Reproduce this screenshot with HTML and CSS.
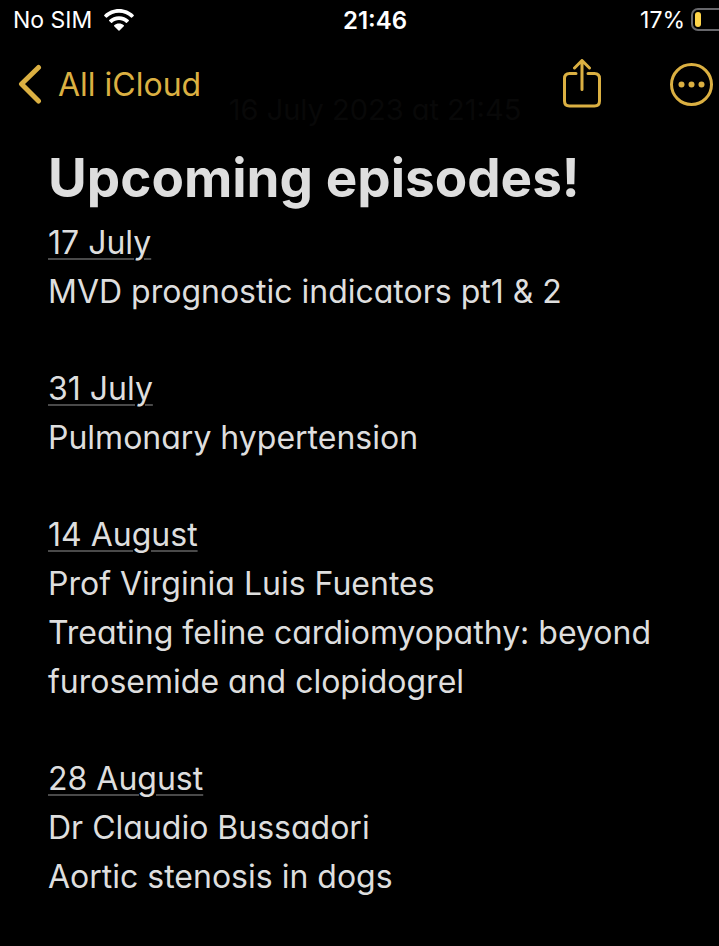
FILE: index.html
```html
<!DOCTYPE html>
<html lang="en">
<head>
<meta charset="utf-8">
<meta name="viewport" content="width=device-width, initial-scale=1">
<title>Upcoming episodes!</title>
<link rel="stylesheet" href="styles.css">
</head>
<body>
<div class="screen">
  <div class="status">
    <div class="status-left">
      <span>No SIM</span>
      <svg class="wifi" width="30" height="22" viewBox="0 0 30 22" aria-hidden="true">
        <path d="M15 0C9.300 0 4 2.200 .3 5.900Q-.1 6.400 .3 6.900L2 8.600Q2.500 9 3 8.600C6.200 5.500 10.400 3.800 15 3.800S23.800 5.500 27 8.600Q27.500 9 28 8.600L29.700 6.900Q30.100 6.400 29.700 5.900C26 2.200 20.700 0 15 0Z"/>
        <path d="M15 7.300C11.200 7.300 7.800 8.700 5.200 11.100Q4.800 11.600 5.200 12L7.100 13.800Q7.600 14.200 8.100 13.800C10 12.100 12.400 11.100 15 11.100S20 12.100 21.900 13.800Q22.400 14.200 22.900 13.800L24.800 12Q25.200 11.600 24.800 11.100C22.200 8.700 18.800 7.300 15 7.300Z"/>
        <path d="M15 14.500C13.100 14.500 11.500 15.100 10.200 16.200Q9.700 16.700 10.200 17.200L14.500 21.400Q15 21.900 15.500 21.400L19.800 17.200Q20.300 16.700 19.800 16.200C18.500 15.100 16.900 14.500 15 14.500Z"/>
      </svg>
    </div>
    <time class="clock">21:46</time>
    <div class="status-right">
      <span>17%</span>
      <svg width="54" height="24" viewBox="0 0 54 24" aria-hidden="true">
        <rect class="battery-shell" x="1" y="1" width="47" height="21" rx="6"/>
        <rect class="battery-level" x="4" y="4" width="6" height="15" rx="3"/>
      </svg>
    </div>
  </div>
  <nav class="toolbar">
    <button class="tool back" type="button">
      <svg width="24" height="40" viewBox="0 0 24 40" aria-hidden="true"><path d="M20.500 3.500L3.500 20L20.500 37"/></svg>
      <span>All iCloud</span>
    </button>
    <div class="actions">
      <button class="tool" type="button" aria-label="Share">
        <svg width="40" height="50" viewBox="0 0 40 50" aria-hidden="true"><path class="thin" d="M14 14.500H7.500Q2.500 14.500 2.500 19.500V42Q2.500 47 7.500 47H32.500Q37.500 47 37.500 42V19.500Q37.500 14.500 32.500 14.500H26M20 30.500V2M12.500 9L20 1.500L27.500 9"/></svg>
      </button>
      <button class="tool" type="button" aria-label="More">
        <svg width="44" height="44" viewBox="0 0 44 44" aria-hidden="true"><circle class="thin" cx="21.500" cy="22.500" r="20"/><g class="dots"><circle cx="11.500" cy="22.500" r="3"/><circle cx="21.500" cy="22.500" r="3"/><circle cx="31.500" cy="22.500" r="3"/></g></svg>
      </button>
    </div>
    <time class="edited">16 July 2023 at 21:45</time>
  </nav>
  <main class="note">
    <h1>Upcoming episodes!</h1>
    <section>
      <p><span class="date">17 July</span></p>
      <p>MVD prognostic indicators pt1 &amp; 2</p>
    </section>
    <section>
      <p><span class="date">31 July</span></p>
      <p>Pulmonary hypertension</p>
    </section>
    <section>
      <p><span class="date">14 August</span></p>
      <p>Prof Virginia Luis Fuentes</p>
      <p>Treating feline cardiomyopathy: beyond furosemide and clopidogrel</p>
    </section>
    <section>
      <p><span class="date">28 August</span></p>
      <p>Dr Claudio Bussadori</p>
      <p>Aortic stenosis in dogs</p>
    </section>
  </main>
</div>
</body>
</html>
```
FILE: styles.css
```css
* { box-sizing: border-box; }

body {
  margin: 0;
  background: #000;
  color: #dedede;
  font-family: Inter, "Liberation Sans", sans-serif;
  font-size: 32px;
  font-feature-settings: "cv11";
  overflow-x: hidden;
}

/* The phone screen runs slightly past the right edge of the window. */
.screen {
  width: calc(100% + 31px);
}

.status {
  display: grid;
  grid-template-columns: 1fr auto 1fr;
  align-items: center;
  height: 40px;
  padding: 0 5px;
  color: #fff;
  font-size: 23px;
}

.status-left,
.status-right {
  display: flex;
  align-items: center;
  gap: 12px;
}

.status-left { padding-left: 8px; }

.status-right {
  justify-content: flex-end;
  gap: 6px;
}

.wifi { fill: #fff; }

.clock {
  font-size: 24px;
  font-weight: 600;
}

.battery-shell {
  fill: none;
  stroke: #67676b;
  stroke-width: 2;
}

.battery-level { fill: #ffd54a; }

.toolbar {
  position: relative;
  display: flex;
  align-items: center;
  justify-content: space-between;
  height: 88px;
  padding: 0 36px 0 18px;
}

.tool {
  display: flex;
  align-items: center;
  padding: 0;
  border: 0;
  background: none;
  color: #dbb042;
  font: inherit;
}

.back { gap: 16px; }

.tool svg {
  fill: none;
  stroke: currentColor;
  stroke-width: 5;
  stroke-linecap: round;
  stroke-linejoin: round;
}

.tool .thin { stroke-width: 3; }

.tool .dots {
  fill: currentColor;
  stroke: none;
}

.actions {
  display: flex;
  align-items: center;
  gap: 68px;
}

/* Edit date faded out beneath the toolbar. */
.edited {
  position: absolute;
  inset: auto 0 0;
  color: #080808;
  font-size: 29px;
  line-height: 36px;
  text-align: center;
  pointer-events: none;
}

.note {
  padding: 18px 72px 40px 48px;
}

h1 {
  margin: 0 0 8px;
  font-size: 53px;
  font-weight: 700;
  line-height: 64px;
}

p {
  margin: 0;
  line-height: 49px;
}

section + section { margin-top: 48px; }

.date {
  text-decoration: underline #4a4a4a 2px;
  text-underline-offset: 4px;
}
```
